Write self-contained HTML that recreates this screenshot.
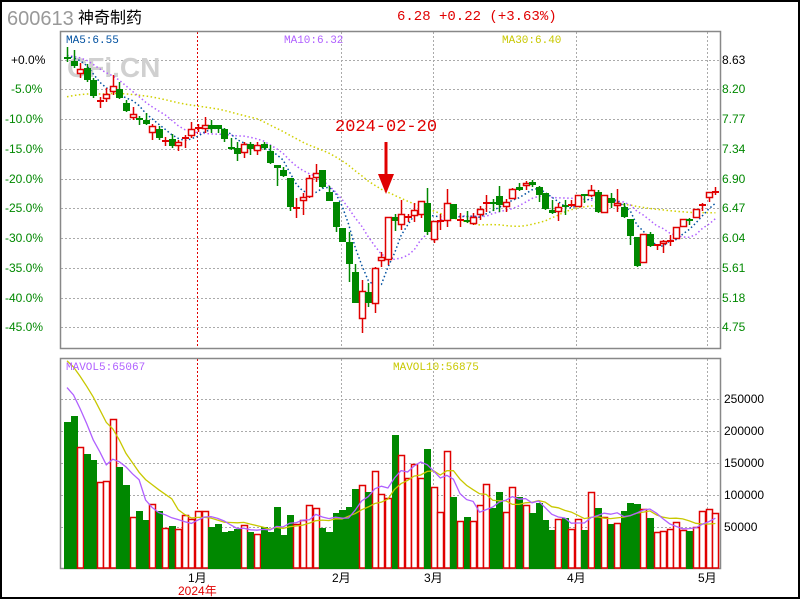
<!DOCTYPE html>
<html><head><meta charset="utf-8">
<style>
html,body{margin:0;padding:0;background:#fff;}
body{width:800px;height:600px;overflow:hidden;position:relative;}
svg{position:absolute;left:0;top:0;}
text{font-family:"Liberation Sans","Noto Sans CJK SC",sans-serif;}
.m{font-family:"Liberation Mono","Noto Sans CJK SC",monospace;}
</style></head><body>
<svg id="s" width="800" height="600" xmlns="http://www.w3.org/2000/svg">
<rect x="1" y="1" width="798" height="597" fill="#fff" stroke="#000" stroke-width="2"/>
<text x="7" y="25" font-size="20" fill="#999" font-family="Liberation Sans">600613</text>
<text x="78" y="23" font-size="16" fill="#000">神奇制药</text>
<text x="397" y="20" font-size="14" fill="#e00000" class="m">6.28 +0.22 (+3.63%)</text>
<g id="grid"></g>
<text x="67" y="77" font-size="28" font-weight="bold" fill="#d0d0d0" font-family="Liberation Sans">CFi.CN</text>
<rect x="60.5" y="31.5" width="660" height="317" fill="none" stroke="#888" stroke-width="1.5"/>
<rect x="60.5" y="358.5" width="660" height="210" fill="none" stroke="#888" stroke-width="1.5"/>
<g id="plot"></g>
<text x="66" y="43" font-size="11" fill="#0050a0" class="m">MA5:6.55</text>
<text x="284" y="43" font-size="11" fill="#b060ff" class="m">MA10:6.32</text>
<text x="502" y="43" font-size="11" fill="#c8c800" class="m">MA30:6.40</text>
<text x="66" y="370" font-size="11" fill="#b060ff" class="m">MAVOL5:65067</text>
<text x="393" y="370" font-size="11" fill="#c8c800" class="m">MAVOL10:56875</text>
<text x="335" y="131" font-size="17" fill="#e00000" class="m">2024-02-20</text>
<line x1="386" y1="142" x2="386" y2="178" stroke="#e00000" stroke-width="3"/>
<polygon points="378,174 394,174 386,194" fill="#e00000"/>
<g font-size="12" class="m" fill="#008800">
<text x="11" y="64" fill="#000">+0.0%</text>
<text x="11" y="93">-5.0%</text><text x="5" y="123">-10.0%</text><text x="5" y="153">-15.0%</text>
<text x="5" y="183">-20.0%</text><text x="5" y="212">-25.0%</text><text x="5" y="242">-30.0%</text>
<text x="5" y="272">-35.0%</text><text x="5" y="302">-40.0%</text><text x="5" y="331">-45.0%</text>
<text x="722" y="64" fill="#000">8.63</text><text x="722" y="93">8.20</text><text x="722" y="123">7.77</text>
<text x="722" y="153">7.34</text><text x="722" y="183">6.90</text><text x="722" y="212">6.47</text>
<text x="722" y="242">6.04</text><text x="722" y="272">5.61</text><text x="722" y="302">5.18</text>
<text x="722" y="331">4.75</text>
</g>
<g font-size="12" fill="#000" font-family="Liberation Sans">
<text x="724" y="403">250000</text><text x="724" y="435">200000</text><text x="724" y="467">150000</text>
<text x="724" y="499">100000</text><text x="724" y="531">50000</text>
<text x="188" y="582">1月</text><text x="332" y="582">2月</text><text x="424" y="582">3月</text>
<text x="567" y="582">4月</text><text x="698" y="582">5月</text>
<text x="178" y="595" fill="#e00000">2024年</text>
</g>
</svg>
<script>
var NS="http://www.w3.org/2000/svg";
function el(p,t,a){var e=document.createElementNS(NS,t);for(var k in a)e.setAttribute(k,a[k]);p.appendChild(e);return e;}
var G=document.getElementById('grid'),P=document.getElementById('plot');
[60,89,119,149,179,208,238,268,298,327].forEach(function(y){el(G,'line',{x1:61,x2:720,y1:y+.5,y2:y+.5,stroke:'#aaa','stroke-dasharray':'2 2'});});
[399,431,463,495,527].forEach(function(y){el(G,'line',{x1:61,x2:720,y1:y+.5,y2:y+.5,stroke:'#aaa','stroke-dasharray':'2 2'});});
[341,433,576,707].forEach(function(x){el(G,'line',{x1:x+.5,x2:x+.5,y1:32,y2:348,stroke:'#aaa','stroke-dasharray':'2 2'});el(G,'line',{x1:x+.5,x2:x+.5,y1:359,y2:568,stroke:'#aaa','stroke-dasharray':'2 2'});});
el(G,'line',{x1:197.5,x2:197.5,y1:32,y2:348,stroke:'#e00000','stroke-dasharray':'2 2'});
el(G,'line',{x1:197.5,x2:197.5,y1:359,y2:568,stroke:'#e00000','stroke-dasharray':'2 2'});
var C=[[57,58,47,62,'g'],[61,66,50,68,'g'],[69,74,63,78,'r'],[68,80,64,82,'g'],[80,96,78,98,'g'],[100,101,97,108,'r'],[94,99,88,102,'r'],[86,92,75,95,'r'],[89,98,82,99,'g'],[103,111,100,112,'g'],
[114,118,107,120,'r'],[118,119,116,125,'g'],[120,124,113,125,'g'],[126,133,124,140,'r'],[129,138,126,140,'g'],[140,141,137,146,'r'],[139,146,134,148,'g'],[142,146,140,151,'r'],[137,139,135,148,'r'],[129,136,122,138,'r'],
[127,128,124,132,'r'],[125,129,117,133,'r'],[125,129,120,133,'g'],[125,129,125,133,'g'],[129,139,128,142,'g'],[147,148,138,150,'g'],[148,154,142,161,'g'],[144,153,142,158,'r'],[144,149,142,155,'g'],[145,151,142,155,'r'],
[144,148,142,150,'g'],[151,163,145,164,'g'],[165,168,165,186,'g'],[170,176,167,177,'g'],[178,207,178,211,'g'],[207,208,198,218,'r'],[197,201,193,215,'r'],[178,197,175,198,'r'],[173,178,164,182,'r'],[170,187,170,188,'g'],
[192,201,186,201,'g'],[202,227,202,232,'g'],[228,242,228,242,'g'],[242,264,232,282,'g'],[272,303,264,303,'g'],[291,319,280,333,'r'],[292,303,283,307,'g'],[268,304,267,313,'r'],[257,261,252,267,'r'],[217,260,217,265,'r'],
[217,221,214,231,'g'],[214,225,200,230,'r'],[216,218,214,222,'r'],[210,216,203,222,'r'],[201,215,201,218,'r'],[203,232,188,235,'g'],[221,240,221,243,'r'],[220,221,214,230,'r'],[203,221,189,227,'r'],[204,219,204,219,'g'],
[219,220,213,227,'r'],[220,222,211,223,'g'],[217,224,213,225,'r'],[209,215,206,220,'r'],[202,204,195,212,'r'],[202,203,199,211,'g'],[196,205,186,212,'g'],[202,207,199,212,'r'],[189,199,188,199,'r'],[187,190,183,191,'g'],
[183,186,181,190,'r'],[182,185,180,187,'g'],[187,195,186,202,'g'],[193,209,193,210,'g'],[210,213,200,214,'g'],[207,212,203,221,'r'],[205,207,200,215,'g'],[204,206,200,207,'r'],[195,207,195,207,'r'],[194,195,194,203,'g'],
[190,196,185,197,'r'],[192,212,190,213,'g'],[195,213,195,213,'r'],[198,203,193,208,'g'],[203,206,189,212,'r'],[207,217,203,218,'g'],[219,236,219,245,'g'],[237,266,237,267,'g'],[234,263,234,263,'r'],[234,246,232,247,'g'],
[244,245,244,250,'r'],[241,244,240,253,'r'],[240,241,235,246,'r'],[227,239,227,239,'r'],[219,227,219,227,'r'],[219,220,218,225,'g'],[209,218,209,218,'r'],[204,205,203,211,'r'],[192,198,192,202,'r'],[191,192,187,195,'r']];
var V=[422,416,447,454,460,482,481,419,467,485,517,511,520,504,511,528,526,529,515,519,511,511,527,524,532,531,529,525,532,534,527,532,507,535,515,524,520,505,508,528,532,513,510,507,489,485,492,471,494,498,435,455,478,464,478,449,487,512,451,497,521,517,521,505,484,508,492,512,487,497,505,513,503,520,530,519,518,529,519,530,492,508,517,524,523,511,503,504,509,518,532,531,529,522,530,531,527,511,509,513];
function X(i){return 67+i*6.55;}
var RED='#e00000',GRN='#008800';
var closes=C.map(function(c){return c[4]=='r'?c[0]:c[1];});
function ma(arr,n,pad){var a=[],full=[];for(var k=0;k<n;k++)full.push(pad);full=full.concat(arr);for(var i=0;i<arr.length;i++){var s=0;for(var j=0;j<n;j++)s+=full[i+n-j];a.push(s/n);}return a;}
function line(a,col,dash,w){var d='';a.forEach(function(y,i){d+=(i?'L':'M')+X(i).toFixed(1)+' '+y.toFixed(1);});var o={d:d,fill:'none',stroke:col,'stroke-width':w};if(dash)o['stroke-dasharray']=dash;el(P,'path',o);}
line(ma(closes,30,98),'#d0d000','1.5 2.5',1.5);
line(ma(closes,10,55),'#b060ff','1.5 2.5',1.5);
line(ma(closes,5,55),'#0050a0','1.5 2.5',1.5);
C.forEach(function(c,i){var x=Math.round(X(i));var col=c[4]=='r'?RED:GRN;
el(P,'line',{x1:x+.5,x2:x+.5,y1:c[2],y2:c[3],stroke:col,'stroke-width':1.5});
var h=Math.max(c[1]-c[0],1);
if(c[4]=='r'){ if(h<=2) el(P,'rect',{x:x-3,y:c[0],width:7,height:2,fill:RED}); else el(P,'rect',{x:x-2.5,y:c[0]+.5,width:6,height:h-1,fill:'#fff',stroke:RED,'stroke-width':1.5});}
else el(P,'rect',{x:x-3,y:c[0],width:7,height:Math.max(h,2),fill:GRN});
var vy=V[i];
if(c[4]=='r') el(P,'rect',{x:x-2.5,y:vy+.5,width:6,height:568-vy-.5,fill:'#fff',stroke:RED,'stroke-width':1.5});
else el(P,'rect',{x:x-3,y:vy,width:7,height:569-vy,fill:GRN});
});
var hv=V.map(function(y){return 569-y;});
line(ma(hv,10,215).map(function(h){return 569-h;}),'#c8c800',null,1.3);
line(ma(hv,5,190).map(function(h){return 569-h;}),'#b060ff',null,1.3);
</script>
</body></html>
